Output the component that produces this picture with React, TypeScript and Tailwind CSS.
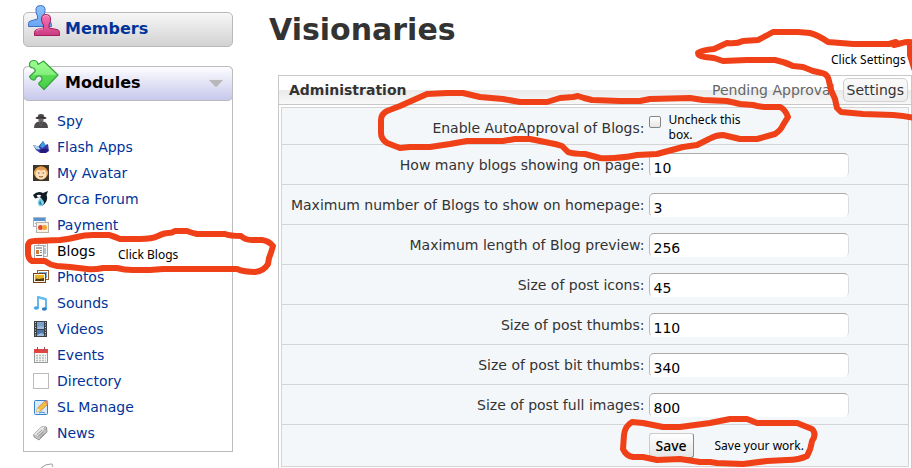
import type { ReactNode } from 'react';

interface ModuleLink {
  label: string;
  icon: ReactNode;
  active?: boolean;
}

interface Setting {
  id: string;
  label: string;
  value: string;
}

const modules: ModuleLink[] = [
  {
    label: 'Spy',
    icon: (
      <>
        <path d="M4.500 4.500 5.500 1.500Q8 .3 10.500 1.500L11.500 4.500Z" fill="#4a4848" />
        <ellipse cx="8" cy="5" rx="5.500" ry="1.200" fill="#353333" />
        <path d="M5.500 5.500h5v2.500q-2.500 2-5 0Z" fill="#6e6560" />
        <path d="M1 15q0-5.500 4.500-6.500h5q4.500 1 4.500 6.500Z" fill="#4c4a4a" />
        <path d="m6 9 2 4 2-4" fill="none" stroke="#666" strokeWidth=".7" />
      </>
    ),
  },
  {
    label: 'Flash Apps',
    icon: (
      <>
        <path d="M0 6l5.500 1.500L10 2l2.500 4L15 5l1 7-3 2H7l-4-3Z" fill="#3a3aa8" />
        <path d="m0 6 5.500 1.500L8 11l-5-1Z" fill="#a5d2ee" />
        <path d="m7 7.500 3-5.500 2.500 4.500L9.500 9Z" fill="#38a2dc" />
        <path d="m6 10.500 8-1 1.500 2-3 2.500H8Z" fill="#26197d" />
      </>
    ),
  },
  {
    label: 'My Avatar',
    icon: (
      <>
        <rect width="16" height="16" fill="#3e3428" />
        <ellipse cx="8" cy="8" rx="7" ry="6.500" fill="#eba95b" />
        <ellipse cx="8" cy="9" rx="5.500" ry="5.500" fill="#fde0b8" />
        <path d="M1.500 7Q3 1.500 8 1.500T14.500 7L11.500 4.500 8 5.500 4.500 4.500Z" fill="#e6994a" />
        <path d="M5 8h1.500M9.500 8H11M6 11.500q2 1 4 0" stroke="#8a5a30" fill="none" />
      </>
    ),
  },
  {
    label: 'Orca Forum',
    icon: (
      <>
        <path d="M0 4Q5-1 10 2l5-2-1.500 4q2 5-2 9l-2.500 2Q11 9 7 6L2 7.500Z" fill="#111c25" />
        <path d="M3.500 4.500q3-1.500 5 .5L5 6.500Z" fill="#fff" />
        <path d="M7 7q-4 4-1 8 4 1 5-3 0-3-4-5Z" fill="#83d1e7" />
        <path d="m7 9 2 5-3-1Z" fill="#1a7fa7" />
      </>
    ),
  },
  {
    label: 'Payment',
    icon: (
      <>
        <rect x=".5" y=".5" width="12" height="9" fill="#f4f8fc" stroke="#a7b9c8" />
        <path d="M1 1h11v3H1Z" fill="#5a93cc" />
        <path d="M2 6.500h3" stroke="#e7a92c" />
        <rect x="3.500" y="5.500" width="12" height="10" fill="#f8f0e4" stroke="#b9b2a8" />
        <circle cx="7.500" cy="10.500" r="2.500" fill="#e54536" />
        <circle cx="11.500" cy="10.500" r="2.500" fill="#f4a532" />
      </>
    ),
  },
  {
    label: 'Blogs',
    active: true,
    icon: (
      <>
        <path d="M5.500.5h9v13h-9Z" fill="#f4f4f4" stroke="#aaa" />
        <path d="M8 3h5M11 6h2M11 8h2M11 10h2" stroke="#7392ad" />
        <path d="M1.500 2.500h9v13h-9Z" fill="#fbfbfb" stroke="#aaa" />
        <path d="M3 5h6M3 12.500h6" stroke="#666" />
        <rect x="3" y="7" width="3" height="4" fill="#d27a38" />
        <path d="M7 7.500h2M7 9.500h2" stroke="#888" />
      </>
    ),
  },
  {
    label: 'Photos',
    icon: (
      <>
        <rect x="4.500" y="1.500" width="11" height="9" fill="#fff" stroke="#985b29" />
        <rect x="6" y="3" width="8" height="6" fill="#75aede" />
        <rect x=".5" y="4.500" width="12" height="9" fill="#fff2d6" stroke="#754117" />
        <rect x="2" y="6" width="9" height="6" fill="#e8b526" />
        <path d="m2 12 1-2.500 3 .5 5-1v3Z" fill="#4c3b17" />
      </>
    ),
  },
  {
    label: 'Sounds',
    icon: (
      <>
        <path d="M5 13V2l8 2v10" fill="none" stroke="#389de0" strokeWidth="1.500" />
        <path d="m5 1 8 2v2.500L5 3.500Z" fill="#64bdf1" />
        <ellipse cx="3.300" cy="13" rx="2.500" ry="1.800" fill="#43a6e5" />
        <ellipse cx="11.300" cy="14" rx="2.500" ry="1.800" fill="#287fc4" />
      </>
    ),
  },
  {
    label: 'Videos',
    icon: (
      <>
        <rect x="1" width="13" height="16" fill="#3c4045" />
        <path d="M4 1h7v7H4Z" fill="#7ba0cb" />
        <path d="M4 9h7v6H4Z" fill="#4a76ad" />
        <path d="m4 7 3-2 4 1v2H4ZM4 14l4-2 3 1v2H4Z" fill="#9bbbe0" />
        <path d="M2.500 1v14M12.500 1v14" stroke="#ccc" strokeDasharray="1 1.500" />
      </>
    ),
  },
  {
    label: 'Events',
    icon: (
      <>
        <rect x="1.500" y="2.500" width="13" height="13" fill="#f5f7f5" stroke="#999" />
        <path d="M1 2h14v4H1Z" fill="#df4543" />
        <path d="M4.500 0v4M11.500 0v4" stroke="#a05050" />
        <path d="M3 8.500h10M3 11h10M3 13.500h10" stroke="#b3beb6" strokeWidth="1.500" strokeDasharray="2 1" />
      </>
    ),
  },
  {
    label: 'Directory',
    icon: <rect x=".5" y=".5" width="15" height="15" fill="#fff" stroke="#bbb" />,
  },
  {
    label: 'SL Manage',
    icon: (
      <>
        <rect x="1.500" y="1.500" width="13" height="14" rx="1" fill="#d8ebff" stroke="#3882c7" />
        <path d="m4.500 9 7-6.500 3 3-7 6.500-4 1Z" fill="#f3bd42" stroke="#b67b2a" strokeWidth=".7" />
        <path d="m11.500 2.500 2-1.500 2 3-1.500 1.500Z" fill="#e88a75" />
        <path d="m4.500 9 3 3-4 1Z" fill="#f8e3bb" />
        <path d="M6 14q3-2 6 0" fill="none" stroke="#4c91cd" />
      </>
    ),
  },
  {
    label: 'News',
    icon: (
      <>
        <path d="M.5 9.500 9 1.500l4.500.5.5 5-8 8-5-3Z" fill="#c2c2c2" stroke="#858585" strokeWidth=".8" />
        <path d="M.5 9.500 9 1.500l4.500.5-9 9Z" fill="#e4e4e4" />
        <path d="m3.500 10 5.500-5M5 11.500l5.500-5M7 12.500l4.500-4" stroke="#888" strokeWidth=".8" />
        <circle cx="12" cy="3.500" r="1" fill="#fff" stroke="#666" strokeWidth=".5" />
      </>
    ),
  },
];

const settings: Setting[] = [
  { id: 'perPage', label: 'How many blogs showing on page:', value: '10' },
  { id: 'homepage', label: 'Maximum number of Blogs to show on homepage:', value: '3' },
  { id: 'preview', label: 'Maximum length of Blog preview:', value: '256' },
  { id: 'icons', label: 'Size of post icons:', value: '45' },
  { id: 'thumbs', label: 'Size of post thumbs:', value: '110' },
  { id: 'bitThumbs', label: 'Size of post bit thumbs:', value: '340' },
  { id: 'fullImages', label: 'Size of post full images:', value: '800' },
];

function MembersIcon() {
  return (
    <svg viewBox="0 0 34 34" className="absolute -top-2 left-1 size-[34px]">
      <defs>
        <linearGradient id="blue" x2="0" y2="1">
          <stop stopColor="#8cc4fa" />
          <stop offset="1" stopColor="#6aa5f2" />
        </linearGradient>
        <linearGradient id="pink" x2="0" y2="1">
          <stop stopColor="#f275b2" />
          <stop offset=".6" stopColor="#e0559a" />
          <stop offset="1" stopColor="#c93a80" />
        </linearGradient>
      </defs>
      <path
        d="M8 3.500Q8.500.5 12.500.5T17 3.500Q17.500 8 15.500 11v3l6 2q2 1 2 5.500H.5v-3q0-2 2-2.500l7-2v-3Q7.500 8 8 3.500Z"
        fill="url(#blue)"
        stroke="#416dc2"
        strokeLinejoin="round"
      />
      <path
        d="M13.500 12.500q.5-3 4.500-3t4.500 3q.5 4.500-1.500 7.500v3l8 1.500q2.500.5 2.500 3v3H6.500v-3q0-2.500 2.500-3l6.500-1.500v-3q-2.500-3-2-7.500Z"
        fill="url(#pink)"
        stroke="#a31d5c"
        strokeLinejoin="round"
      />
      <path d="M15 12q.5-1.500 3-1.500t3 1.500M8 26q.5-1 7-2.500" fill="none" stroke="#f9a6cd" strokeWidth=".8" />
    </svg>
  );
}

function ModulesIcon() {
  return (
    <svg viewBox="0 0 32 32" className="absolute -top-2 left-1 size-8">
      <defs>
        <linearGradient id="puzzle" x2="0" y2="1">
          <stop stopColor="#9dff8f" />
          <stop offset=".48" stopColor="#85ee7c" />
          <stop offset=".52" stopColor="#58dc55" />
          <stop offset="1" stopColor="#43cd44" />
        </linearGradient>
      </defs>
      <path
        d="M5 9Q1 8.500 1.500 5 2 1.500 6 1.500q3.500 0 4 4L15.500 2 30 16 16 30.500l-5-5q-1-1 1-2.500 3-2 1.500-5-3-2.500-5.500.5-.5 3-3 2.500Q2 20 1.500 17.500L7 12.500Q7.500 9.500 5 9Z"
        fill="url(#puzzle)"
        stroke="#3aa141"
        strokeWidth="1.200"
        strokeLinejoin="round"
      />
    </svg>
  );
}

function Sidebar() {
  return (
    <nav className="w-[210px] shrink-0 pt-3">
      <a
        href="#members"
        className="relative flex h-[35px] items-center rounded-[5px] border border-[#b9b9b9] bg-linear-to-b from-[#f7f7f7] to-[#d2d2d2] pb-0.5 pl-[41px] text-base font-bold text-[#003399]"
      >
        <MembersIcon />
        Members
      </a>

      <section className="mt-[19px] rounded-t-[5px] border border-t-0 border-[#bcbcbc]">
        <h2 className="relative -mx-px flex h-[35px] items-center justify-between rounded-[5px] border border-[#bcbcbc] bg-linear-to-b from-[#fdfdff] to-[#c8c8ec] pr-2 pb-0.5 pl-[41px] text-base font-bold text-black">
          <ModulesIcon />
          Modules
          <svg viewBox="0 0 16 10" className="h-2.5 w-4">
            <path d="M0 1.500h16L8 10Z" fill="#b8b8bc" stroke="#fff" strokeWidth=".5" />
          </svg>
        </h2>
        <ul className="pt-[7px] pb-[5px]">
          {modules.map((item) => (
            <li key={item.label}>
              <a
                href={`#${item.label}`}
                className={`flex h-[26px] items-center gap-2 pl-[9px] text-sm ${item.active ? 'text-black' : 'text-[#003399]'}`}
              >
                <svg viewBox="0 0 16 16" className="size-4 shrink-0">
                  {item.icon}
                </svg>
                {item.label}
              </a>
            </li>
          ))}
        </ul>
      </section>

      {/* top of the next block's icon */}
      <svg viewBox="0 0 16 5" className="mt-[11px] ml-[17px] h-[5px] w-4">
        <path d="M1 5Q5 1 11 1q3 0 1 3" fill="none" stroke="#999" />
      </svg>
    </nav>
  );
}

function SettingsTable() {
  return (
    <table className="w-full table-fixed border-collapse bg-[#f3f7fa] text-sm text-[#333]">
      <colgroup>
        <col className="w-[367px]" />
        <col />
      </colgroup>
      <tbody className="[&>tr]:border [&>tr]:border-[#d5d5d5]">
        <tr className="h-[37px]">
          <td className="pt-1 pr-1 text-right">
            <label htmlFor="autoApproval">Enable AutoApproval of Blogs:</label>
          </td>
          <td className="align-top">
            <div className="flex gap-2 pt-1">
              <input
                id="autoApproval"
                type="checkbox"
                className="mt-1 size-3 appearance-none rounded-[2px] border border-[#858585] bg-linear-to-b from-white to-[#e6e6e6]"
              />
              <span className="w-24 font-['Noto_Sans'] text-xs leading-[15px] text-black">
                Uncheck this box.
              </span>
            </div>
          </td>
        </tr>
        {settings.map((setting) => (
          <tr key={setting.id} className="h-10">
            <td className="pr-1 text-right whitespace-nowrap">
              <label htmlFor={setting.id}>{setting.label}</label>
            </td>
            <td>
              <input
                id={setting.id}
                type="text"
                defaultValue={setting.value}
                className="block h-6 w-[200px] rounded-[5px] border border-t-[#aaa] border-r-[#ddd] border-b-white border-l-[#bbb] bg-white px-1 pt-1.5 text-sm text-black"
              />
            </td>
          </tr>
        ))}
        <tr className="h-[42px]">
          <td />
          <td>
            <div className="flex items-center gap-[21px]">
              <button
                type="button"
                className="h-[25px] w-[45px] rounded-[3px] border border-t-[#ccc] border-r-[#888] border-b-[#888] border-l-[#ccc] bg-linear-to-b from-white to-[#e4e4e4] font-['Noto_Sans'] text-sm leading-5 font-medium text-black"
              >
                Save
              </button>
              <span className="font-['Noto_Sans'] text-xs text-black">Save your work.</span>
            </div>
          </td>
        </tr>
      </tbody>
    </table>
  );
}

// hand drawn marker loops
const loops = [
  'M28 245Q29 241 34 241L60 240Q70 239 77 237T93 235H109Q113 236 120 239H140Q152 239 158 236T168 233 175 231H187Q192 233 197 234H225Q230 236 241 236 245 240 252 240H262Q269 241 273 246 271 253 269 258L268 264Q264 271 255 272 244 272 237 269H163L150 270H133Q124 270 117 268H103Q94 270 87 269L70 267 57 266Q50 265 45 261L32 261Q28 259 28 253Z',
  'M381 120Q381 114 387 111L400 106 427 94 447 93H463L480 97 503 99 520 102H547L560 98 573 97 578 96 584 98 592 100 620 101H640L650 99 690 98 703 100 727 101 740 104 753 105Q760 107 767 107H780Q785 109 788 117L783 125Q781 130 775 134L757 139H740L723 135Q716 135 709 139L697 145 683 147 657 154 637 155Q617 159 600 158L585 154Q573 154 568 152L562 146Q556 144 550 143L530 139H515L503 141H467L450 144 430 147 410 147 400 148 387 143Q381 139 381 133Z',
  'M915 43Q908 41 902 43L894 45 896 42 889 44H853L828 42Q818 35 810 33L798 32H773Q766 36 758 40L743 41Q737 44 727 43L714 49Q702 50 698 53 698 56 705 57L714 58 723 61 747 60H775Q785 62 793 66L803 67 813 71 822 73Q828 74 829 81L831 90 835 99 837 108 841 112 863 114 893 115Q905 116 915 118M910 43V55L914 68',
  'M632 422Q625 426 624 435L623 449Q626 456 633 457L643 457 657 460 680 459 700 462 710 462 717 463 743 464 767 461 787 460Q799 460 807 456 811 449 812 441 817 434 812 429L797 423H757L747 419H730L710 423 680 427H663L643 423Z',
];

function MarkerOverlay() {
  return (
    <div className="pointer-events-none absolute top-0 left-0 h-[468px] w-[912px] overflow-hidden">
      <svg
        viewBox="0 0 912 468"
        className="size-full"
        fill="none"
        stroke="#f04018"
        strokeWidth="6"
        strokeLinecap="round"
        strokeLinejoin="round"
      >
        {loops.map((d) => (
          <path key={d} d={d} />
        ))}
      </svg>
      <span className="absolute top-[247px] left-[118px] font-['Noto_Sans'] text-xs text-black">
        Click Blogs
      </span>
      <span className="absolute top-[52px] left-[831px] font-['Noto_Sans'] text-xs whitespace-nowrap text-black">
        Click Settings
      </span>
    </div>
  );
}

export default function App() {
  return (
    <div className="relative flex min-h-screen overflow-hidden bg-white pl-[23px] font-['DejaVu_Sans',Verdana,sans-serif]">
      <Sidebar />

      <main className="ml-9 flex min-w-0 flex-1 flex-col">
        <h1 className="pt-3 text-3xl leading-9 font-bold text-[#333]">Visionaries</h1>

        <section className="mt-[27px] ml-[9px] flex-1 border border-b-0 border-[#c8c8c8]">
          <header className="flex h-[29px] items-center justify-between border-b border-[#c8c8c8] bg-linear-to-b from-white from-50% via-[#eaeaea] via-50% to-[#f8f8f8] pr-[3px] pl-2.5 text-sm">
            <h2 className="font-bold text-[#333]">Administration</h2>
            <div className="flex items-center gap-2">
              <a href="#pending" className="text-[#666]">
                Pending Approval
              </a>
              <button
                type="button"
                className="h-6 rounded-[5px] border border-[#d0d0d0] bg-linear-to-b from-[#fafafa] to-[#eee] px-[3px] text-[#333]"
              >
                Settings
              </button>
            </div>
          </header>
          <div className="px-0.5 pt-0.5">
            <SettingsTable />
          </div>
        </section>
      </main>

      <MarkerOverlay />
    </div>
  );
}
